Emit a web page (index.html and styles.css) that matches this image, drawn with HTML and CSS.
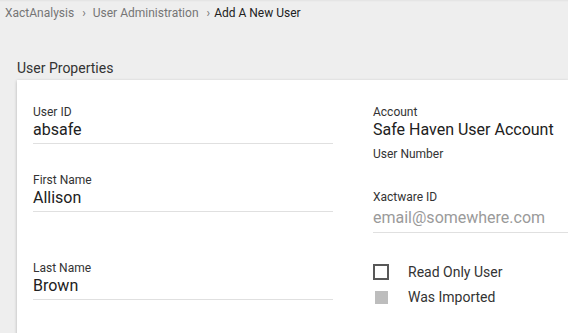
FILE: index.html
```html
<!DOCTYPE html>
<html>
<head>
<meta charset="utf-8">
<link rel="stylesheet" href="styles.css">
</head>
<body>
<div class="topline"></div>
<nav class="crumbs">
  <span class="crumb">XactAnalysis</span>
  <span class="sep sep1">›</span>
  <span class="crumb">User Administration</span>
  <span class="sep sep2">›</span>
  <span class="crumb current">Add A New User</span>
</nav>
<h2 class="section-title">User Properties</h2>
<div class="card">
  <div class="col col-left">
    <div class="field f-userid">
      <div class="label">User ID</div>
      <div class="value underlined">absafe</div>
    </div>
    <div class="field f-first">
      <div class="label">First Name</div>
      <div class="value underlined">Allison</div>
    </div>
    <div class="field f-last">
      <div class="label">Last Name</div>
      <div class="value underlined">Brown</div>
    </div>
  </div>
  <div class="col col-right">
    <div class="field f-account">
      <div class="label">Account</div>
      <div class="value">Safe Haven User Account</div>
    </div>
    <div class="field f-usernum">
      <div class="label">User Number</div>
    </div>
    <div class="field f-xid">
      <div class="label">Xactware ID</div>
      <div class="value underlined placeholder">email@somewhere.com</div>
    </div>
    <div class="checks">
      <div class="check">
        <span class="box-slot"><span class="box outline"></span></span>
        <span class="check-label">Read Only User</span>
      </div>
      <div class="check">
        <span class="box-slot"><span class="box filled"></span></span>
        <span class="check-label">Was Imported</span>
      </div>
    </div>
  </div>
</div>
</body>
</html>
```

FILE: styles.css
```css
html, body {
  margin: 0;
  padding: 0;
  overflow: hidden;
}
body {
  background: #eeeeee;
  font-family: Roboto, "Liberation Sans", sans-serif;
  color: #212121;
  width: 568px;
  height: 333px;
}
.topline {
  height: 2px;
  margin-bottom: -2px;
  background: linear-gradient(#e2e2e2, #eeeeee);
}
.crumbs {
  padding: 5px 0 0 5px;
  font-size: 12px;
  line-height: 16px;
  height: 16px;
  white-space: nowrap;
  display: flex;
}
.crumb {
  color: #757575;
}
.crumb.current {
  color: #212121;
}
.sep {
  color: #757575;
  font-size: 12px;
}
.sep1 {
  margin: 0 7px 0 8px;
}
.sep2 {
  margin: 0 4px 0 8px;
}
.section-title {
  margin: 38px 0 3px 17px;
  font-size: 14px;
  line-height: 18px;
  font-weight: 400;
  color: #333333;
}
.card {
  margin-left: 17px;
  background: #ffffff;
  box-shadow: 0 1px 3px rgba(0, 0, 0, 0.25);
  padding: 25px 0 40px 16px;
  display: grid;
  grid-template-columns: 300px 1fr;
  column-gap: 40px;
}
.label {
  font-size: 12px;
  line-height: 14px;
  color: #333333;
}
.value {
  font-size: 16px;
  line-height: 19px;
  color: #212121;
  margin-top: 1px;
}
.underlined {
  padding-bottom: 4px;
  border-bottom: 1px solid #e0e0e0;
}
.f-first {
  margin-top: 29px;
}
.f-last {
  margin-top: 49px;
}
.f-usernum {
  margin-top: 8px;
}
.f-xid {
  margin-top: 29px;
}
.f-xid .value {
  margin-top: 4px;
  padding-bottom: 5px;
}
.placeholder {
  color: #9a9a9a;
}
.checks {
  margin-top: 31px;
  display: flex;
  flex-direction: column;
  gap: 9px;
}
.check {
  display: flex;
  align-items: center;
  height: 16px;
}
.box-slot {
  width: 16px;
  height: 16px;
  display: flex;
  align-items: center;
  justify-content: center;
  margin-right: 19px;
}
.box.outline {
  width: 12px;
  height: 12px;
  border: 2px solid #585858;
}
.box.filled {
  width: 13px;
  height: 13px;
  background: #bdbdbd;
}
.check-label {
  font-size: 14px;
  line-height: 16px;
  color: #333333;
}
```
